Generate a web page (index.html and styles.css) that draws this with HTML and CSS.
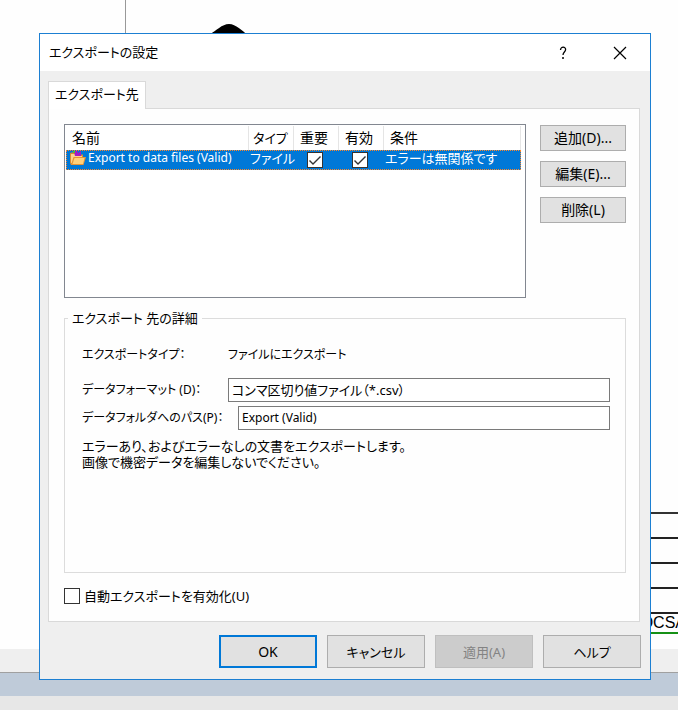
FILE: index.html
```html
<!DOCTYPE html>
<html lang="ja">
<head>
<meta charset="utf-8">
<title>エクスポートの設定</title>
<link rel="stylesheet" href="styles.css">
</head>
<body>
<div class="desktop" aria-hidden="true">
  <div class="page">
    <div class="page-left"></div>
    <svg class="blob" width="38" height="12" viewBox="0 0 38 12"><path d="M0 10C6 7 12 0 19 0S32 7 38 11V12H0z"/></svg>
    <div class="form-lines">
      <div class="form-row"></div>
      <div class="form-row"></div>
      <div class="form-row"></div>
      <div class="form-row"></div>
      <div class="form-text">OCSA</div>
    </div>
  </div>
  <div class="app-bar"></div>
  <div class="app-edge"></div>
  <div class="app-foot"></div>
</div>

<main class="dialog" role="dialog" aria-labelledby="title">
  <header class="titlebar">
    <h1 id="title">エクスポートの設定</h1>
    <button class="caption" type="button" aria-label="ヘルプ"><svg width="14" height="14" viewBox="0 0 14 14"><path d="M4.500 4C4.500 .2 10 .4 9.600 3.800 9.400 6 7 6.200 7 9" fill="none" stroke="#000" stroke-width="1.300"/><circle cx="7" cy="12" r="1"/></svg></button>
    <button class="caption" type="button" aria-label="閉じる"><svg width="14" height="14" viewBox="0 0 14 14"><path d="M1 1L13 13M13 1L1 13" fill="none" stroke="#000" stroke-width="1.200"/></svg></button>
  </header>

  <div class="content">
    <div class="tabs" role="tablist"><button class="tab" type="button" role="tab" aria-selected="true">エクスポート先</button></div>
    <section class="panel">
      <div class="targets">
        <div class="list">
          <table>
            <colgroup><col class="c-name"><col class="c-flag"><col class="c-flag"><col class="c-flag"><col></colgroup>
            <thead><tr><th>名前</th><th class="tight">タイプ</th><th>重要</th><th>有効</th><th>条件</th></tr></thead>
            <tbody><tr>
              <td><div class="name"><svg width="16" height="16" viewBox="0 0 16 16"><path d="M0 3.500L1 2.500H5L7 4.500H13V15H1L0 13z" fill="#d98b32"/><path d="M1 4H5L7 6H12V13H1z" fill="#fbd48d"/><path d="M4 2L7 0L8 3L11 1V6H5z" fill="#a21bc6"/><path d="M3 1H5V3H3z" fill="#45c33b"/><path d="M3.500 7H16L13.500 15H1z" fill="#e79534"/><path d="M4.500 8H14.500L13 14H2.500z" fill="#ffd17a"/></svg>Export to data files (Valid)</div></td>
              <td>ファイル</td>
              <td class="check"><input type="checkbox" checked aria-label="重要"></td>
              <td class="check"><input type="checkbox" checked aria-label="有効"></td>
              <td>エラーは無関係です</td>
            </tr></tbody>
          </table>
        </div>
        <div class="actions">
          <button class="btn" type="button">追加(D)...</button>
          <button class="btn" type="button">編集(E)...</button>
          <button class="btn" type="button">削除(L)</button>
        </div>
      </div>

      <fieldset class="details">
        <legend>エクスポート 先の詳細</legend>
        <div class="row kind"><span class="label">エクスポートタイプ：</span><span class="value">ファイルにエクスポート</span></div>
        <div class="row"><label class="label" for="format">データフォーマット (D)：</label><input id="format" type="text" value="コンマ区切り値ファイル（*.csv）"></div>
        <div class="row"><label class="label label-wide" for="path">データフォルダへのパス(P)：</label><input id="path" type="text" value="Export (Valid)"></div>
        <p>エラーあり、およびエラーなしの文書をエクスポートします。<br>画像で機密データを編集しないでください。</p>
      </fieldset>

      <div class="auto"><input id="auto" type="checkbox"><label for="auto">自動エクスポートを有効化(U)</label></div>
    </section>
    <footer class="footer">
      <button class="btn primary" type="button">OK</button>
      <button class="btn" type="button">キャンセル</button>
      <button class="btn" type="button" disabled>適用(A)</button>
      <button class="btn" type="button">ヘルプ</button>
    </footer>
  </div>
</main>
</body>
</html>
```
FILE: styles.css
```css
* { box-sizing: border-box; }

body {
  margin: 0;
  min-height: 100vh;
  padding: 33px 27px 30px 39px;
  position: relative;
  background: #fefefe;
  color: #000;
  font: 13px/16px "Noto Sans", "Noto Sans CJK JP", sans-serif;
  font-feature-settings: "palt";
}

button, input { font: inherit; color: inherit; font-feature-settings: inherit; }

/* Application behind the dialog */
.desktop {
  position: absolute;
  inset: 0;
  display: flex;
  flex-direction: column;
  overflow: hidden;
}
.page { flex: 1; display: flex; align-items: flex-start; }
.page-left { width: 126px; height: 60px; border-right: 1px solid #999; }
.blob { margin: 24px 0 0 84px; }
.form-lines { flex: 1; margin-top: 512px; border-top: 2px solid #333; }
.form-row { height: 25px; border-bottom: 2px solid #222; }
.form-text {
  height: 20px;
  border-bottom: 2px solid #159015;
  font: 16px/18px "Liberation Sans", sans-serif;
  display: flex;
  justify-content: flex-end;
  margin-right: -8px;
}
.app-bar { height: 24px; background: #efefef; border-bottom: 1px solid #a0a0a0; }
.app-edge { height: 23px; background: #bfcbd9; }
.app-foot { height: 14px; background: #e7e7e7; }

.dialog {
  position: relative;
  background: #efefef;
  border: 1px solid #1c7fd2;
}
.titlebar {
  display: flex;
  align-items: center;
  height: 37px;
  padding: 0 2px 0 9px;
  background: #fff;
}
h1 { flex: 1; margin: 0; padding-bottom: 2px; font-size: 13px; font-weight: 400; }
.caption {
  display: flex;
  align-items: center;
  justify-content: center;
  width: 57px;
  height: 36px;
  padding: 0;
  border: 0;
  background: none;
}

.content { padding: 10px 9px 11px 8px; }
.tabs { display: flex; }
.tab {
  position: relative;
  z-index: 1;
  height: 28px;
  margin-bottom: -1px;
  padding: 0 6px 4px;
  border: 1px solid #d9d9d9;
  border-bottom: 0;
  background: #fff;
}
.panel {
  margin-right: 1px;
  padding: 15px 13px 17px 15px;
  border: 1px solid #d9d9d9;
  background: #fefefe;
}

.targets { display: flex; gap: 14px; }
.list {
  flex: 1;
  height: 174px;
  padding: 1px 4px 0 1px;
  border: 1px solid #828790;
  background: #fff;
}
table { width: 100%; table-layout: fixed; border-collapse: separate; border-spacing: 0; }
.c-name { width: 183px; }
.c-flag { width: 45px; }
th {
  height: 24px;
  padding: 0 6px;
  border-right: 1px solid #e5e5e5;
  font-weight: 400;
  font-size: 14px;
  text-align: left;
  white-space: nowrap;
}
th.tight { font-size: 13px; padding: 0 4px; }
tbody tr { background: #0078d7; color: #fff; outline: 1px dotted #ff8728; outline-offset: -1px; }
td { height: 20px; padding: 0 0 0 1px; line-height: 16px; white-space: nowrap; vertical-align: top; }
.name { display: flex; align-items: center; gap: 2px; padding-left: 3px; font-size: 12px; }
td.check { padding: 2px 0 0 13px; }

input[type="checkbox"] {
  appearance: none;
  display: block;
  width: 16px;
  height: 16px;
  margin: 0;
  border: 1px solid #333;
  background: #fff;
}
input[type="checkbox"]:checked::before {
  content: "";
  display: block;
  width: 14px;
  height: 14px;
  background: #333;
  clip-path: polygon(1px 8px, 2px 7px, 5px 10px, 12px 3px, 13px 4px, 5px 12px);
}

.actions { display: flex; flex-direction: column; gap: 10px; width: 86px; padding-top: 1px; }
.btn {
  height: 26px;
  padding: 0;
  border: 1px solid #adadad;
  background: #e1e1e1;
  text-align: center;
}
.actions .btn { font-size: 14px; }

.details {
  min-width: 0;
  height: 263px;
  margin: 12px 0 0;
  padding: 17px 15px 0 17px;
  border: 1px solid #dcdcdc;
}
.details legend { margin-left: -14px; padding: 0 4px; }
.row { display: flex; align-items: center; margin-bottom: 4px; }
.kind { height: 24px; margin-bottom: 11px; }
.label { width: 146px; flex: none; font-size: 12px; white-space: nowrap; }
.label-wide { width: 156px; }
.value { font-size: 12px; }
.row input {
  flex: 1;
  min-width: 0;
  height: 24px;
  padding: 0 3px 2px;
  border: 1px solid #7a7a7a;
  background: #fff;
}
#path { font-size: 12px; }
.details p { margin: 8px 0 0; }

.auto { display: flex; align-items: center; gap: 4px; margin-top: 15px; }

.footer { display: flex; justify-content: flex-end; gap: 10px; margin-top: 13px; }
.footer .btn { width: 98px; height: 33px; }
.footer .primary { border: 2px solid #0078d7; font-size: 14px; }
.footer .btn:disabled { border-color: #bfbfbf; background: #ccc; color: #838383; }
```
